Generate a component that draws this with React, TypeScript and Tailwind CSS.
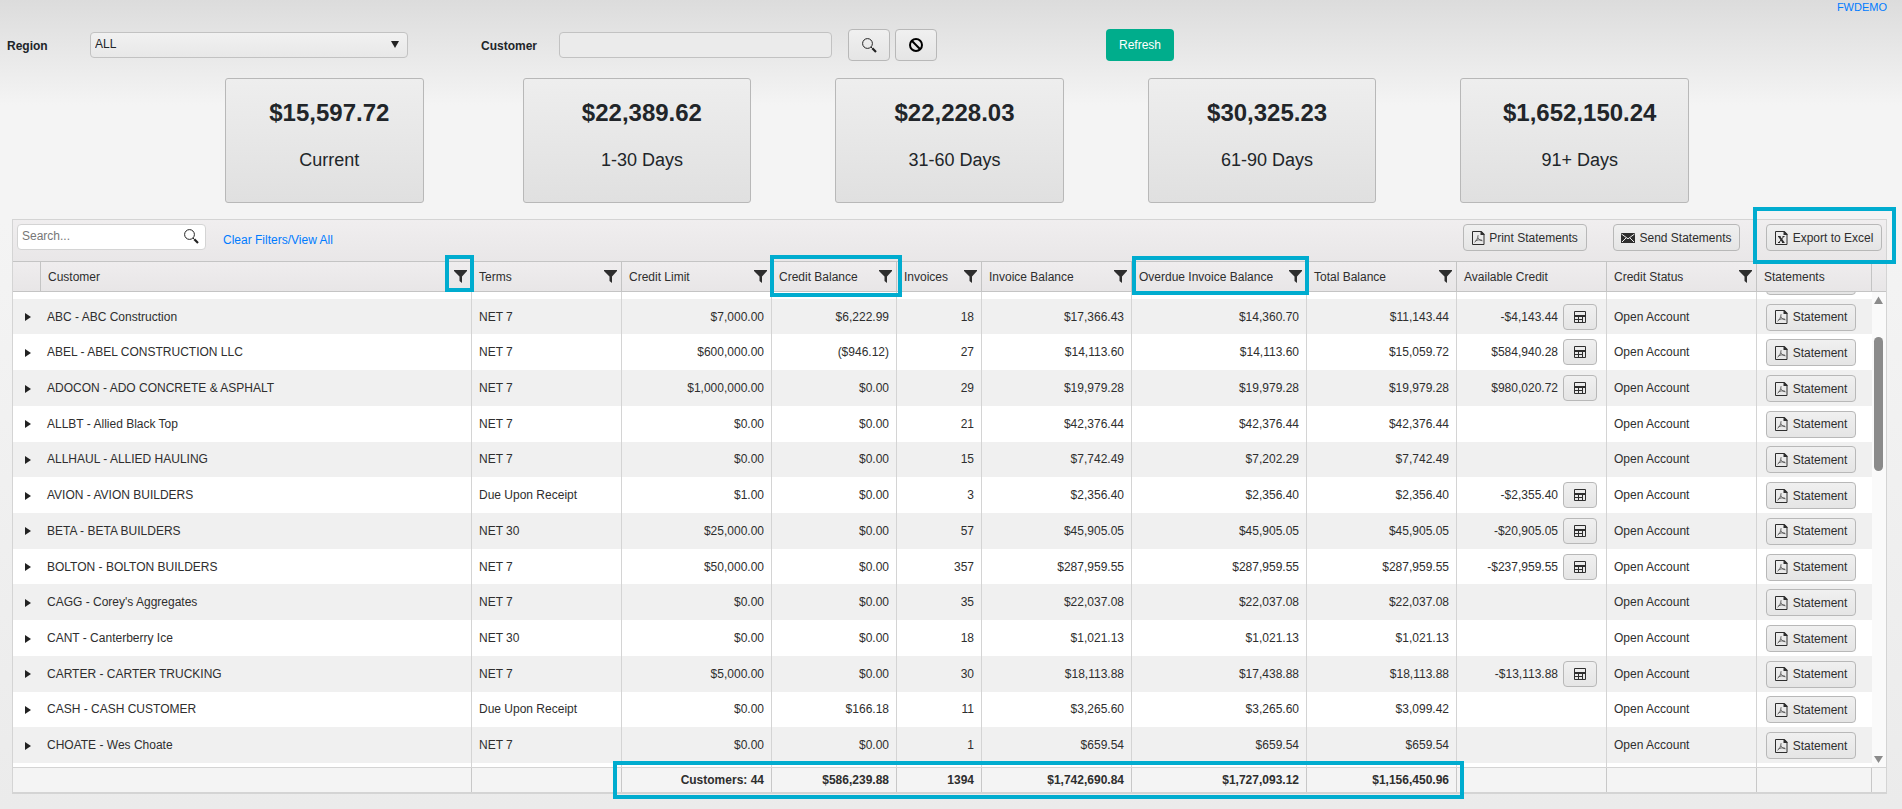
import { useLayoutEffect, useRef } from "react";

type Row = {
  customer: string;
  terms: string;
  limit: string;
  credit: string;
  invoices: number;
  invoiceBalance: string;
  overdue: string;
  total: string;
  available?: string;
};

const ROWS: Row[] = [
  { customer: "ABC - ABC Construction", terms: "NET 7", limit: "$7,000.00", credit: "$6,222.99", invoices: 18, invoiceBalance: "$17,366.43", overdue: "$14,360.70", total: "$11,143.44", available: "-$4,143.44" },
  { customer: "ABEL - ABEL CONSTRUCTION LLC", terms: "NET 7", limit: "$600,000.00", credit: "($946.12)", invoices: 27, invoiceBalance: "$14,113.60", overdue: "$14,113.60", total: "$15,059.72", available: "$584,940.28" },
  { customer: "ADOCON - ADO CONCRETE & ASPHALT", terms: "NET 7", limit: "$1,000,000.00", credit: "$0.00", invoices: 29, invoiceBalance: "$19,979.28", overdue: "$19,979.28", total: "$19,979.28", available: "$980,020.72" },
  { customer: "ALLBT - Allied Black Top", terms: "NET 7", limit: "$0.00", credit: "$0.00", invoices: 21, invoiceBalance: "$42,376.44", overdue: "$42,376.44", total: "$42,376.44" },
  { customer: "ALLHAUL - ALLIED HAULING", terms: "NET 7", limit: "$0.00", credit: "$0.00", invoices: 15, invoiceBalance: "$7,742.49", overdue: "$7,202.29", total: "$7,742.49" },
  { customer: "AVION - AVION BUILDERS", terms: "Due Upon Receipt", limit: "$1.00", credit: "$0.00", invoices: 3, invoiceBalance: "$2,356.40", overdue: "$2,356.40", total: "$2,356.40", available: "-$2,355.40" },
  { customer: "BETA - BETA BUILDERS", terms: "NET 30", limit: "$25,000.00", credit: "$0.00", invoices: 57, invoiceBalance: "$45,905.05", overdue: "$45,905.05", total: "$45,905.05", available: "-$20,905.05" },
  { customer: "BOLTON - BOLTON BUILDERS", terms: "NET 7", limit: "$50,000.00", credit: "$0.00", invoices: 357, invoiceBalance: "$287,959.55", overdue: "$287,959.55", total: "$287,959.55", available: "-$237,959.55" },
  { customer: "CAGG - Corey's Aggregates", terms: "NET 7", limit: "$0.00", credit: "$0.00", invoices: 35, invoiceBalance: "$22,037.08", overdue: "$22,037.08", total: "$22,037.08" },
  { customer: "CANT - Canterberry Ice", terms: "NET 30", limit: "$0.00", credit: "$0.00", invoices: 18, invoiceBalance: "$1,021.13", overdue: "$1,021.13", total: "$1,021.13" },
  { customer: "CARTER - CARTER TRUCKING", terms: "NET 7", limit: "$5,000.00", credit: "$0.00", invoices: 30, invoiceBalance: "$18,113.88", overdue: "$17,438.88", total: "$18,113.88", available: "-$13,113.88" },
  { customer: "CASH - CASH CUSTOMER", terms: "Due Upon Receipt", limit: "$0.00", credit: "$166.18", invoices: 11, invoiceBalance: "$3,265.60", overdue: "$3,265.60", total: "$3,099.42" },
  { customer: "CHOATE - Wes Choate", terms: "NET 7", limit: "$0.00", credit: "$0.00", invoices: 1, invoiceBalance: "$659.54", overdue: "$659.54", total: "$659.54" },
];

const AGING = [
  { amount: "$15,597.72", label: "Current" },
  { amount: "$22,389.62", label: "1-30 Days" },
  { amount: "$22,228.03", label: "31-60 Days" },
  { amount: "$30,325.23", label: "61-90 Days" },
  { amount: "$1,652,150.24", label: "91+ Days" },
];

const COLUMNS = [
  { title: "Customer", filter: true, mark: "-top-[7px] -right-[3px] w-[29px] h-[37px]" },
  { title: "Terms", filter: true },
  { title: "Credit Limit", filter: true },
  { title: "Credit Balance", filter: true, mark: "-top-[7px] -left-[2px] -right-[6px] h-[42px]" },
  { title: "Invoices", filter: true },
  { title: "Invoice Balance", filter: true },
  { title: "Overdue Invoice Balance", filter: true, mark: "-top-[6px] left-0 -right-[3px] h-[39px]" },
  { title: "Total Balance", filter: true },
  { title: "Available Credit", filter: false },
  { title: "Credit Status", filter: true },
  { title: "Statements", filter: false },
];

const BTN =
  "flex items-center justify-center rounded-[4px] border border-[#b8b8b8] bg-linear-to-b from-[#f0f0f0] to-[#e5e5e5] text-[#2e2e2e]";
const FIELD = "rounded-[4px] border border-[#c2c2c2] px-1 text-xs outline-none";

function PdfIcon() {
  return (
    <svg className="h-[14px] w-[13px] shrink-0" viewBox="0 0 13 14" fill="none" stroke="#2e2e2e" aria-hidden="true">
      <path d="M.5.5h8.5l3 3v10H.5z" />
      <path d="M8.500 0h1l3 3v1h-4z" fill="#2e2e2e" stroke="none" />
      <path d="M2.500 11.200c1.600-.7 3.400-3.600 3.600-7M6 6.600c.6 1.600 2 3 4.500 3.200M3.500 9.800c1.800-.9 3.800-1.200 6.500-.6" strokeWidth=".9" stroke="#555" />
    </svg>
  );
}

function ExcelIcon() {
  return (
    <svg className="h-[14px] w-[13px] shrink-0" viewBox="0 0 13 14" fill="none" stroke="#2e2e2e" aria-hidden="true">
      <path d="M.5.5h8.5l3 3v10H.5z" />
      <path d="M8.500 0h1l3 3v1h-4z" fill="#2e2e2e" stroke="none" />
      <path d="M4.200 5.500l4.300 6" strokeWidth="2" />
      <path d="M8.700 5.500l-4.700 6M3 5.500h2.500M7.500 5.500h2M3 11.500h2M7 11.500h2.500" />
    </svg>
  );
}

function MailIcon() {
  return (
    <svg className="h-[10px] w-[14px] shrink-0" viewBox="0 0 14 10" aria-hidden="true">
      <path d="M0 0h14v10H0z" fill="#2e2e2e" />
      <path d="M.5 1l6.500 4.800L13.500 1M1 9l4-4M13 9L9 5" fill="none" stroke="#eee" strokeWidth="1" />
    </svg>
  );
}

function CalcIcon() {
  return (
    <svg className="h-3 w-3" viewBox="0 0 12 12" fill="none" stroke="#2e2e2e" aria-hidden="true">
      <path d="M.5.5h11v11H.5zM0 4.500h12M4.500 5v7M8.500 5v7M1 8.500h7.500" />
      <path d="M0 4h12v2H0z" fill="#2e2e2e" stroke="none" />
    </svg>
  );
}

function SearchIcon() {
  return (
    <svg className="h-[15px] w-[15px]" viewBox="0 0 15 15" fill="none" stroke="#222" aria-hidden="true">
      <circle cx="5.500" cy="5.500" r="4.900" strokeWidth="1" />
      <path d="M9 9l1.500 1.500" strokeWidth="1" />
      <path d="M10.300 10.300l3.700 3.700" strokeWidth="2.200" />
    </svg>
  );
}

function FilterIcon() {
  return (
    <svg className="h-[13px] w-[13px]" viewBox="0 0 13 13" fill="#2e2e2e" aria-hidden="true">
      <path d="M0 0h13v1L8 6.500V13L5.500 11V6.500L0 1z" />
    </svg>
  );
}

function Mark({ className }: { className: string }) {
  return (
    <span
      className={`pointer-events-none absolute z-10 border-4 border-[#00accf] ${className}`}
    />
  );
}

// header, body and footer are separate tables, so they share one set of widths
function Cols() {
  return (
    <colgroup>
      <col className="w-[28px]" />
      <col />
      <col className="w-[150px]" />
      <col className="w-[150px]" />
      <col className="w-[125px]" />
      <col className="w-[85px]" />
      <col className="w-[150px]" />
      <col className="w-[175px]" />
      <col className="w-[150px]" />
      <col className="w-[150px]" />
      <col className="w-[150px]" />
      <col className="w-[115px]" />
    </colgroup>
  );
}

function FilterBar() {
  return (
    <div className="flex h-8 items-center text-xs">
      <label htmlFor="region" className="w-[83px] pt-px font-bold">
        Region
      </label>
      <div className="relative w-[318px]">
        <select
          id="region"
          className={`${FIELD} h-[26px] w-full appearance-none bg-linear-to-b from-[#f1f1f1] to-[#e8e8e8] pb-[3px]`}
        >
          <option>ALL</option>
        </select>
        <svg className="pointer-events-none absolute top-[9px] right-[9px] h-[7px] w-2" viewBox="0 0 8 7" aria-hidden="true">
          <path d="M0 0h8L4 7z" fill="#222" />
        </svg>
      </div>
      <label htmlFor="customer" className="ml-[73px] w-[78px] pt-px font-bold">
        Customer
      </label>
      <input id="customer" type="text" className={`${FIELD} h-[26px] w-[273px] bg-[#ebebeb]`} />
      <button type="button" aria-label="Find customer" className={`${BTN} ml-4 h-8 w-[42px]`}>
        <SearchIcon />
      </button>
      <button type="button" aria-label="Clear customer" className={`${BTN} ml-[5px] h-8 w-[42px]`}>
        <svg className="h-[14px] w-[14px]" viewBox="0 0 14 14" fill="none" stroke="#000" strokeWidth="2" aria-hidden="true">
          <circle cx="7" cy="7" r="6" />
          <path d="M2.800 2.800l8.400 8.400" />
        </svg>
      </button>
      <button type="button" className="ml-[169px] h-8 w-[68px] rounded-[4px] bg-[#00ad8c] text-white">
        Refresh
      </button>
    </div>
  );
}

function Toolbar() {
  return (
    <div className="relative flex h-[41px] items-start bg-linear-to-b from-[#f0eeef] to-[#e9e7e8] pt-1 pl-1 text-xs">
      <div className="relative w-[189px]">
        <input
          type="search"
          aria-label="Search"
          placeholder="Search..."
          className={`${FIELD} h-[26px] w-full border-[#d4d4d4] bg-white pb-[3px] placeholder:text-[#777]`}
        />
        <span className="absolute top-[5px] right-[7px]">
          <SearchIcon />
        </span>
      </div>
      <a href="#all" className="mt-2 ml-[17px] leading-4 text-[#007bff]">
        Clear Filters/View All
      </a>
      <button type="button" className={`${BTN} ml-auto h-[27px] w-[124px] gap-1`}>
        <PdfIcon />
        Print Statements
      </button>
      <button type="button" className={`${BTN} ml-[26px] h-[27px] w-[127px] gap-1`}>
        <MailIcon />
        Send Statements
      </button>
      <button type="button" className={`${BTN} mr-1 ml-[26px] h-[27px] w-[116px] gap-[5px]`}>
        <ExcelIcon />
        Export to Excel
      </button>
      <Mark className="-top-[13px] -right-[10px] h-[57px] w-[143px]" />
    </div>
  );
}

function CustomerRow({ row }: { row: Row }) {
  const text = "border-r border-[#d4d4d4] px-[7px] py-0";
  const money = "border-r border-[#d4d4d4] px-[7px] py-0 text-right";
  return (
    <tr className="h-[35px] odd:bg-white even:bg-[#f0f0f0]">
      <td className="p-0 pt-px">
        <button type="button" aria-label={`Expand ${row.customer}`} className="ml-3 block">
          <svg className="h-2 w-[6px]" viewBox="0 0 6 8" aria-hidden="true">
            <path d="M0 0l6 4-6 4z" fill="#222" />
          </svg>
        </button>
      </td>
      <td className="border-r border-[#d4d4d4] px-[6px] py-0">{row.customer}</td>
      <td className={text}>{row.terms}</td>
      <td className={money}>{row.limit}</td>
      <td className={money}>{row.credit}</td>
      <td className={money}>{row.invoices}</td>
      <td className={money}>{row.invoiceBalance}</td>
      <td className={money}>{row.overdue}</td>
      <td className={money}>{row.total}</td>
      <td className="border-r border-[#d4d4d4] p-0">
        {row.available && (
          <div className="flex items-center justify-end gap-[5px] pr-[9px]">
            <span>{row.available}</span>
            <button type="button" aria-label="Calculate credit" className={`${BTN} h-[26px] w-[34px]`}>
              <CalcIcon />
            </button>
          </div>
        )}
      </td>
      <td className={text}>Open Account</td>
      <td className="p-0 pt-px pl-[9px]">
        <button type="button" className={`${BTN} h-[27px] w-[90px] gap-[5px]`}>
          <PdfIcon />
          Statement
        </button>
      </td>
    </tr>
  );
}

function PendingRow() {
  return (
    <tr className="h-[35px] bg-white">
      <td className="p-0" />
      {COLUMNS.slice(0, -1).map((c) => (
        <td key={c.title} className="border-r border-[#d4d4d4] p-0" />
      ))}
      <td className="p-0 pt-px pl-[9px]">
        <div className={`${BTN} h-[27px] w-[90px]`} />
      </td>
    </tr>
  );
}

export default function App() {
  const bodyRef = useRef<HTMLDivElement>(null);

  useLayoutEffect(() => {
    if (bodyRef.current) bodyRef.current.scrollTop = 29;
  }, []);

  const total = "border-r border-[#c8c8c8] px-[7px] text-right";

  return (
    <div className="min-h-screen bg-[linear-gradient(#dcdcdc_0px,#f4f4f4_105px,#f4f4f4_220px,#ebebeb_100%)] pb-[15px] font-['Liberation_Sans',Arial,sans-serif] text-xs text-[#212529]">
      <div className="flex h-[29px] justify-end pr-[15px]">
        <a href="#account" className="h-4 text-[11px] leading-[14px] text-[#007bff]">
          FWDEMO
        </a>
      </div>
      <div className="pl-[7px]">
        <FilterBar />
      </div>

      <div className="mt-[17px] grid grid-cols-[214fr_229fr_229fr_229fr_229fr] gap-x-[84px] pr-[213px] pl-[225px]">
        {AGING.map((a) => (
          <div
            key={a.label}
            className="h-[125px] rounded-[3px] border border-[#b8b8b8] bg-linear-to-b from-[#eeeeee] to-[#e0e0e0] pt-5 pl-[10px] text-center first:mr-[15px]"
          >
            <p className="text-2xl leading-7 font-bold">{a.amount}</p>
            <p className="mt-[21px] text-lg leading-6">{a.label}</p>
          </div>
        ))}
      </div>

      <div className="mt-4 mr-[15px] ml-3 border border-b-2 border-[#d4d4d4] text-[#2e2e2e]">
        <Toolbar />

        <div className="border-y border-[#c4c4c4] bg-linear-to-b from-[#efedee] to-[#e8e6e7] pr-[14px]">
          <table className="w-full table-fixed border-separate border-spacing-0">
            <Cols />
            <thead>
              <tr className="h-[29px]">
                <th className="border-r border-[#c4c4c4] p-0" aria-label="Expand" />
                {COLUMNS.map((c) => (
                  <th key={c.title} className="relative border-r border-[#c4c4c4] py-0 pr-1 pl-[7px] text-left font-normal">
                    <div className="flex items-center justify-between whitespace-nowrap">
                      {c.title}
                      {c.filter && (
                        <button type="button" aria-label={`Filter ${c.title}`}>
                          <FilterIcon />
                        </button>
                      )}
                    </div>
                    {c.mark && <Mark className={c.mark} />}
                  </th>
                ))}
              </tr>
            </thead>
          </table>
        </div>

        <div className="flex h-[475px]">
          <div ref={bodyRef} className="flex-1 overflow-y-auto bg-white [scrollbar-width:none]">
            <table className="h-[536px] w-full table-fixed border-separate border-spacing-0">
              <Cols />
              <tbody>
                <PendingRow />
                {ROWS.map((row) => (
                  <CustomerRow key={row.customer} row={row} />
                ))}
                <PendingRow />
              </tbody>
            </table>
          </div>
          <div className="flex w-[14px] flex-col items-center bg-[#fafafa] py-1 pr-px">
            <svg className="h-[8px] w-[9px]" viewBox="0 0 9 8" aria-hidden="true">
              <path d="M4.500 0.500L9 8H0z" fill="#8b8b8b" />
            </svg>
            <div className="mt-[33px] h-[134px] w-[9px] rounded-full bg-[#8b8b8b]" />
            <svg className="mt-auto h-[7px] w-[9px]" viewBox="0 0 9 7" aria-hidden="true">
              <path d="M0 0h9L4.500 7z" fill="#8b8b8b" />
            </svg>
          </div>
        </div>

        <div className="relative border-t border-[#d4d4d4] bg-[#f4f4f4] pr-[14px]">
          <table className="w-full table-fixed border-separate border-spacing-0 font-bold">
            <Cols />
            <tbody>
              <tr className="h-6">
                <td colSpan={2} className={total} />
                <td className={total} />
                <td className={total}>Customers: 44</td>
                <td className={total}>$586,239.88</td>
                <td className={total}>1394</td>
                <td className={total}>$1,742,690.84</td>
                <td className={total}>$1,727,093.12</td>
                <td className={total}>$1,156,450.96</td>
                <td className={total} />
                <td className={total} />
                <td className={total} />
              </tr>
            </tbody>
          </table>
          <Mark className="-top-[7px] right-[422px] h-[38px] w-[851px]" />
        </div>
      </div>
    </div>
  );
}
